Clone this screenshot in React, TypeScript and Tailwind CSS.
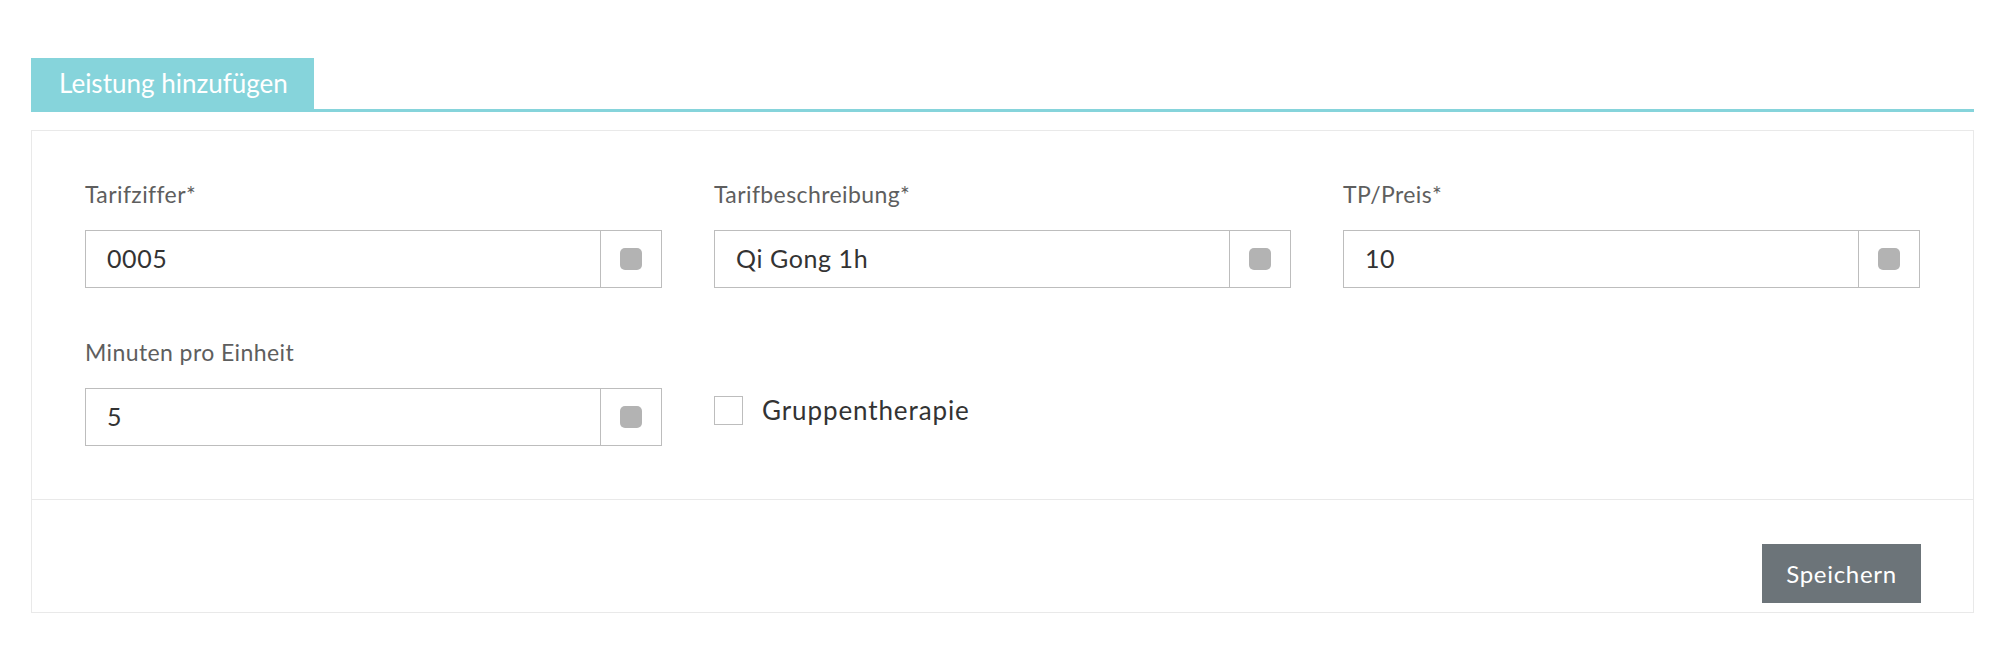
const fields = [
  { label: "Tarifziffer*", value: "0005" },
  { label: "Tarifbeschreibung*", value: "Qi Gong 1h" },
  { label: "TP/Preis*", value: "10" },
];

const Field = ({ label, value }: { label: string; value: string }) => {
  return (
    <div className="flex flex-col">
      <label className="text-[23px] leading-[28px] tracking-[0.4px] text-[#5e5e5e]">
        {label}
      </label>
      <div className="mt-[22px] flex h-[58px] border border-[#bdbdbd] bg-white">
        <input
          className="min-w-0 flex-1 bg-transparent pl-[21px] text-[25px] tracking-[0.6px] text-[#333] outline-none"
          defaultValue={value}
        />
        <span className="flex w-[61px] items-center justify-center border-l border-[#bdbdbd]">
          <span className="h-[22px] w-[22px] rounded-[5px] bg-[#b3b3b3]" />
        </span>
      </div>
    </div>
  );
};

export default function App() {
  return (
    <div
      className="min-h-screen bg-white pl-[31px] pr-[28px] pt-[58px]"
      style={{ fontFamily: "Lato, 'Open Sans', sans-serif" }}
    >
      <div className="flex border-b-[3px] border-[#86d4db]">
        <div className="flex h-[51px] items-center bg-[#86d4db] pl-[28px] pr-[26px] text-[26px] text-white">
          Leistung hinzufügen
        </div>
      </div>

      <div className="mt-[18px] border border-[#e9e9e9]">
        <div className="px-[53px] pt-[49px] pb-[53px]">
          <div className="grid grid-cols-3 gap-x-[52px]">
            {fields.map((f) => (
              <Field key={f.label} label={f.label} value={f.value} />
            ))}
          </div>
          <div className="mt-[50px] grid grid-cols-3 gap-x-[52px]">
            <Field label="Minuten pro Einheit" value="5" />
            <label className="mt-[58px] flex h-[28px] items-center gap-[19px] self-start">
              <span className="h-[29px] w-[29px] border border-[#bdbdbd] bg-white" />
              <span className="text-[26px] tracking-[0.9px] text-[#333]">Gruppentherapie</span>
            </label>
          </div>
        </div>
        <div className="flex justify-end border-t border-[#e9e9e9] px-[52px] pt-[44px] pb-[9px]">
          <button className="h-[59px] w-[159px] bg-[#6c7479] text-[24px] tracking-[0.7px] text-white">
            Speichern
          </button>
        </div>
      </div>
    </div>
  );
}
